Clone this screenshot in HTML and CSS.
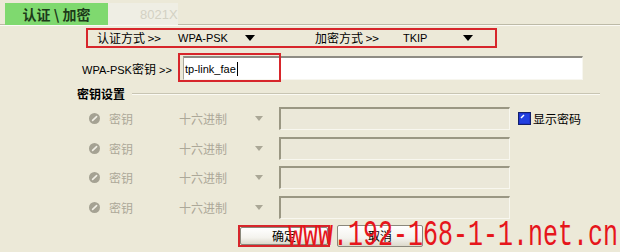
FILE: index.html
```html
<!DOCTYPE html>
<html lang="zh-CN">
<head>
<meta charset="utf-8">
<title>认证 \ 加密</title>
<link rel="stylesheet" href="styles.css">
</head>
<body>
<div class="tabs">
  <div class="tab tab-active">认证 \ 加密</div>
  <div class="tab tab-off">8021X</div>
</div>

<div class="auth-box">
  <span class="cjk">认证方式 &gt;&gt;</span>
  <span>WPA-PSK</span>
  <span><i class="tri"></i></span>
  <span class="cjk">加密方式 &gt;&gt;</span>
  <span>TKIP</span>
  <span><i class="tri"></i></span>
</div>

<div class="psk-row">
  <span class="psk-label">WPA-PSK<span class="cjk">密钥</span> &gt;&gt;</span>
  <div class="psk-input">
    <span class="psk-text">tp-link_fae</span><span class="caret"></span>
    <span class="mark"></span>
  </div>
</div>

<div class="section">
  <span class="section-title">密钥设置</span>
  <span class="section-line"></span>
</div>

<div class="keys">
  <div class="key-row">
    <svg class="radio" width="11" height="11" viewBox="0 0 11 11"><circle cx="5.5" cy="5.5" r="5.5" fill="#a5a293"/><path d="M3.6 7.4 L7.6 3.6" stroke="#f1efe6" stroke-width="1.6" stroke-linecap="round"/></svg>
    <span class="key-name">密钥</span>
    <span class="key-type">十六进制</span>
    <i class="tri tri-dis"></i>
    <span class="key-input"></span>
    <svg class="check" width="13" height="13" viewBox="0 0 13 13"><rect x="0.5" y="0.5" width="12" height="12" fill="#1d33cf" stroke="#12206b"/><rect x="2" y="2" width="9" height="9" fill="#2140e0"/><path d="M3 6 L6 3" stroke="#ffffff" stroke-width="1.5"/></svg>
    <span class="check-label">显示密码</span>
  </div>
  <div class="key-row">
    <svg class="radio" width="11" height="11" viewBox="0 0 11 11"><circle cx="5.5" cy="5.5" r="5.5" fill="#a5a293"/><path d="M3.6 7.4 L7.6 3.6" stroke="#f1efe6" stroke-width="1.6" stroke-linecap="round"/></svg>
    <span class="key-name">密钥</span>
    <span class="key-type">十六进制</span>
    <i class="tri tri-dis"></i>
    <span class="key-input"></span>
  </div>
  <div class="key-row">
    <svg class="radio" width="11" height="11" viewBox="0 0 11 11"><circle cx="5.5" cy="5.5" r="5.5" fill="#a5a293"/><path d="M3.6 7.4 L7.6 3.6" stroke="#f1efe6" stroke-width="1.6" stroke-linecap="round"/></svg>
    <span class="key-name">密钥</span>
    <span class="key-type">十六进制</span>
    <i class="tri tri-dis"></i>
    <span class="key-input"></span>
  </div>
  <div class="key-row">
    <svg class="radio" width="11" height="11" viewBox="0 0 11 11"><circle cx="5.5" cy="5.5" r="5.5" fill="#a5a293"/><path d="M3.6 7.4 L7.6 3.6" stroke="#f1efe6" stroke-width="1.6" stroke-linecap="round"/></svg>
    <span class="key-name">密钥</span>
    <span class="key-type">十六进制</span>
    <i class="tri tri-dis"></i>
    <span class="key-input"></span>
  </div>
</div>

<div class="buttons">
  <div class="ok-wrap"><button class="btn btn-ok">确定</button></div>
  <button class="btn btn-cancel">取消</button>
</div>

<div class="watermark">www.192-168-1-1.net.cn</div>
</body>
</html>
```

FILE: styles.css
```css
* { box-sizing: border-box; }

body {
  margin: 0;
  width: 620px;
  height: 252px;
  overflow: hidden;
  position: relative;
  background: #ece9d8;
  color: #000;
  font: 11px "Liberation Sans", "Noto Sans CJK SC", sans-serif;
}

.cjk { font-family: "Noto Sans CJK SC", sans-serif; font-size: 12px; }

.tabs {
  display: flex;
  height: 25px;
  padding: 3px 0 0 5px;
  border-bottom: 1px solid #bdbaa7;
  box-shadow: 0 1px 0 #fbfaf4;
}

.tab {
  height: 22px;
  display: flex;
  align-items: center;
}

.tab-active {
  width: 103px;
  justify-content: center;
  background: #7fd96f;
  color: #1d3a1a;
  font: bold 14px "Noto Sans CJK SC", sans-serif;
}

.tab-off {
  width: 70px;
  padding-left: 32px;
  background: #efeee4;
  color: #d3d1c3;
  font: 13px "Liberation Sans", sans-serif;
}

.auth-box {
  margin: 3px 0 0 86px;
  width: 411px;
  height: 20px;
  border: 2px solid #d7262b;
  padding-left: 9px;
  display: grid;
  grid-template-columns: 81px 67px 70px 88px 60px 9px;
  align-items: center;
  line-height: 14px;
}

.tri {
  display: block;
  width: 0;
  height: 0;
  border-left: 5px solid transparent;
  border-right: 5px solid transparent;
  border-top: 6px solid #000;
}

.tri-dis {
  border-left-width: 4px;
  border-right-width: 4px;
  border-top: 5px solid #aaa796;
}

.psk-row {
  margin-top: 8px;
  height: 24px;
  padding-left: 82px;
  display: flex;
  align-items: center;
}

.psk-label { width: 101px; }

.psk-input {
  position: relative;
  width: 400px;
  height: 24px;
  background: #fff;
  border-top: 2px solid #8e8c84;
  border-left: 1px solid #a9a79c;
  border-right: 1px solid #f7f6ef;
  border-bottom: 1px solid #f7f6ef;
  display: flex;
  align-items: center;
  padding-left: 1px;
}

.caret {
  display: inline-block;
  width: 1px;
  height: 14px;
  background: #000;
  margin-left: 1px;
}

.mark {
  position: absolute;
  left: -6px;
  top: -5px;
  width: 103px;
  height: 29px;
  border: 2px solid #d7262b;
}

.section {
  margin-top: 7px;
  height: 14px;
  padding: 0 20px 0 77px;
  display: flex;
  align-items: center;
}

.section-title {
  font: bold 12px "Noto Sans CJK SC", sans-serif;
  line-height: 14px;
}

.section-line {
  flex: 1;
  margin-left: 7px;
  height: 2px;
  border-top: 1px solid #c8c5b3;
  border-bottom: 1px solid #fbfaf3;
}

.keys {
  margin-top: 6px;
  display: flex;
  flex-direction: column;
  gap: 6.6px;
}

.key-row {
  height: 23px;
  padding-left: 89px;
  display: flex;
  align-items: center;
  font: 12px "Noto Sans CJK SC", sans-serif;
  color: #aca899;
}

.radio { margin-right: 9px; flex: none; }

.key-name { width: 70px; }
.key-type { width: 76px; }

.key-row .tri-dis { margin-right: 16px; }

.key-input {
  width: 231px;
  height: 23px;
  background: #ebe8d9;
  border-top: 2px solid #9a9783;
  border-left: 2px solid #9a9783;
  border-right: 1px solid #f8f7ef;
  border-bottom: 1px solid #f8f7ef;
}

.check { margin-left: 8px; flex: none; }

.check-label {
  margin-left: 2px;
  color: #000;
}

.buttons {
  margin-top: 6px;
  padding-left: 238px;
  display: flex;
  gap: 7px;
}

.ok-wrap {
  width: 92px;
  height: 22px;
  border: 2px solid #d7262b;
  display: flex;
}

.btn {
  height: 22px;
  margin: 0;
  padding: 0;
  font: 12px "Noto Sans CJK SC", sans-serif;
  color: #000;
  border: 1px solid #8a887c;
  border-radius: 2px;
  background: linear-gradient(#ffffff, #f4f3ee 60%, #dcd9cb);
}

.btn-ok {
  width: 88px;
  height: 18px;
  line-height: 14px;
}

.btn-cancel { width: 86px; }

.watermark {
  position: absolute;
  left: 288px;
  top: 226px;
  font: 25px "Liberation Mono", monospace;
  line-height: 25px;
  color: #e6161c;
  white-space: nowrap;
  transform: scaleY(1.45);
  transform-origin: 0 19px;
}
```
